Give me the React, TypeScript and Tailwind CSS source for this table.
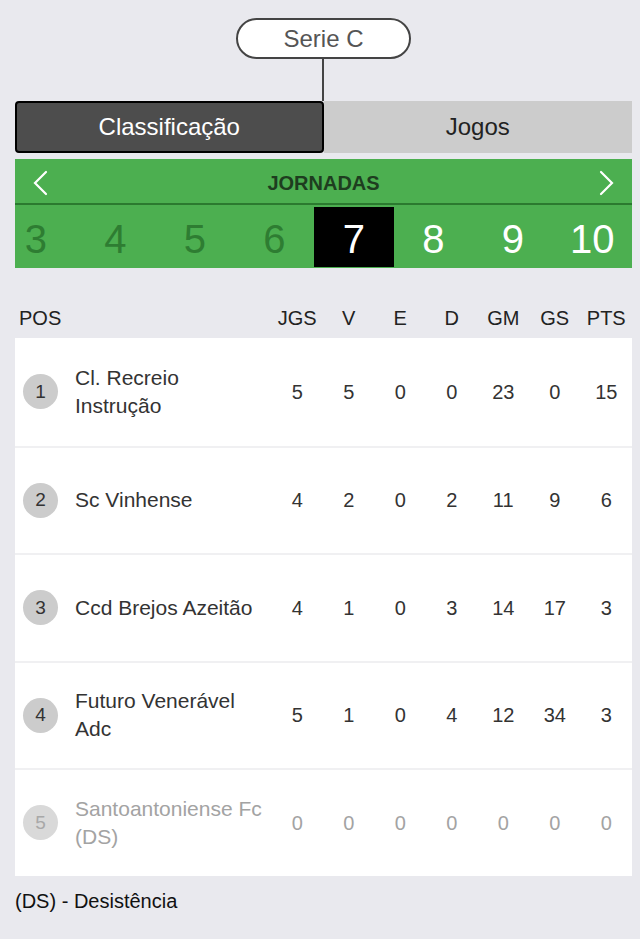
import React from 'react'

interface Team {
  pos: number
  name: string
  jgs: number
  v: number
  e: number
  d: number
  gm: number
  gs: number
  pts: number
  desistiu?: boolean
}

const teams: Team[] = [
  { pos: 1, name: 'Cl. Recreio\nInstrução', jgs: 5, v: 5, e: 0, d: 0, gm: 23, gs: 0, pts: 15 },
  { pos: 2, name: 'Sc Vinhense', jgs: 4, v: 2, e: 0, d: 2, gm: 11, gs: 9, pts: 6 },
  { pos: 3, name: 'Ccd Brejos Azeitão', jgs: 4, v: 1, e: 0, d: 3, gm: 14, gs: 17, pts: 3 },
  { pos: 4, name: 'Futuro Venerável\nAdc', jgs: 5, v: 1, e: 0, d: 4, gm: 12, gs: 34, pts: 3 },
  { pos: 5, name: 'Santoantoniense Fc\n(DS)', jgs: 0, v: 0, e: 0, d: 0, gm: 0, gs: 0, pts: 0, desistiu: true },
]

const jornadas = [3, 4, 5, 6, 7, 8, 9, 10]
const atual = 7
const colunas = ['JGS', 'V', 'E', 'D', 'GM', 'GS', 'PTS']

export default function App() {
  return (
    <div className="min-h-screen bg-[#e9e9ee] pl-[15px] pr-[8px] pt-[18px] pb-6 font-['Liberation_Sans',Arial,sans-serif]">
      {/* serie */}
      <div className="flex flex-col items-center">
        <div className="w-[175px] h-[41px] rounded-full border-2 border-[#444] bg-white flex items-center justify-center text-[24px] text-[#555]">
          Serie C
        </div>
        <div className="w-[2px] h-[42px] bg-[#444] -translate-x-[1px]" />
      </div>

      {/* tabs */}
      <div className="grid grid-cols-2 h-[52px]">
        <button className="bg-[#4d4d4d] border-2 border-black rounded-[4px] text-white text-[24px]">
          Classificação
        </button>
        <button className="bg-[#cccccc] text-[#222] text-[24px]">Jogos</button>
      </div>

      {/* jornadas */}
      <div className="mt-[6px] bg-[#4caf50]">
        <div className="h-[46px] pt-[3px] flex items-center justify-between px-[17px] border-b-2 border-[#2b7a2f]">
          <svg width="16" height="26" viewBox="0 0 16 26" fill="none" stroke="white" strokeWidth="2.2" strokeLinecap="round">
            <polyline points="14,2 3,13 14,24" />
          </svg>
          <span className="font-bold text-[20px] text-[#1e3d1f]">JORNADAS</span>
          <svg width="16" height="26" viewBox="0 0 16 26" fill="none" stroke="white" strokeWidth="2.2" strokeLinecap="round">
            <polyline points="2,2 13,13 2,24" />
          </svg>
        </div>
        <div className="h-[63px] pt-[2px] pb-[1px] flex justify-end overflow-hidden">
          {jornadas.map((j) => (
            <div
              key={j}
              className={
                'shrink-0 w-[79.5px] h-[60px] pt-[4px] flex items-center justify-center text-[40px] ' +
                (j === atual ? 'bg-black text-white' : j < atual ? 'text-[#2e7d32]' : 'text-white')
              }
            >
              {j}
            </div>
          ))}
        </div>
      </div>

      {/* cabeçalho */}
      <div className="mt-[30px] h-[40px] flex items-center text-[20px] text-[#222]">
        <div className="flex-1 pl-[4px]">POS</div>
        {colunas.map((c) => (
          <div key={c} className="w-[51.5px] text-center">{c}</div>
        ))}
      </div>

      {/* tabela */}
      <div className="bg-white">
        {teams.map((t, i) => {
          const cor = t.desistiu ? 'text-[#a3a3a3]' : 'text-[#333]'
          return (
            <div
              key={t.pos}
              className={'h-[107.5px] flex items-center ' + (i > 0 ? 'border-t-2 border-[#f0f0f2]' : '')}
            >
              <div className="flex-1 flex items-center pl-[8px]">
                <div
                  className={
                    'w-[35px] h-[35px] rounded-full flex items-center justify-center text-[19px] ' +
                    (t.desistiu ? 'bg-[#d9d9d9] text-[#a8a8a8]' : 'bg-[#cccccc] text-[#333]')
                  }
                >
                  {t.pos}
                </div>
                <div className={'ml-[17px] text-[21px] leading-[28px] whitespace-pre-line ' + cor}>{t.name}</div>
              </div>
              {[t.jgs, t.v, t.e, t.d, t.gm, t.gs, t.pts].map((n, k) => (
                <div key={k} className={'w-[51.5px] text-center text-[20px] ' + cor}>
                  {n}
                </div>
              ))}
            </div>
          )
        })}
      </div>

      <p className="mt-[10px] text-[20px] text-[#111]">(DS) - Desistência</p>
    </div>
  )
}
